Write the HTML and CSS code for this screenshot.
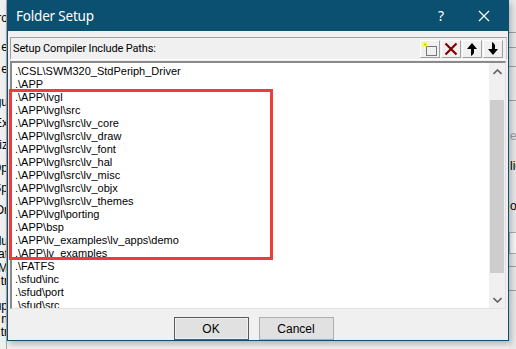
FILE: index.html
```html
<!DOCTYPE html>
<html>
<head>
<meta charset="utf-8">
<link rel="stylesheet" href="styles.css">
</head>
<body>
<div class="desk">
  <div class="bg-left">
    <span class="frag f1">ro</span>
    <span class="frag f2">e</span>
    <span class="frag f3">e</span>
    <span class="frag f4">gu</span>
    <span class="frag f5">Ex</span>
    <span class="frag f6">niz</span>
    <span class="frag f7">Op</span>
    <span class="frag f8">Sp</span>
    <span class="frag f9">Or</span>
    <span class="frag f10">lu</span>
    <span class="frag f11">at</span>
    <span class="frag f12">M</span>
    <span class="frag f13">tr</span>
    <span class="frag f14">up</span>
    <span class="frag f15">n</span>
    <span class="frag f16">tr</span>
  </div>
  <div class="dialog">
    <div class="titlebar">
      <span class="title">Folder Setup</span>
      <span class="help">?</span>
      <svg class="close" width="12" height="12" viewBox="0 0 12 12"><path d="M1 1 L11 11 M11 1 L1 11" stroke="#fff" stroke-width="1.2" fill="none"/></svg>
    </div>
    <div class="body">
      <div class="header">
        <span class="label">Setup Compiler Include Paths:</span>
        <div class="tools">
          <div class="tbtn">
            <svg width="16" height="16" viewBox="0 0 16 16">
              <rect x="4.5" y="5.5" width="10" height="9" fill="none" stroke="#000" stroke-width="1" stroke-dasharray="1 1"/>
              <path d="M3 1 V6 M0.5 3.5 H5.5 M1 1.5 L5 5.5 M5 1.5 L1 5.5" stroke="#ffff00" stroke-width="1"/>
              <path d="M3 2.5 V4.5 M2 3.5 H4" stroke="#c8c800" stroke-width="1"/>
            </svg>
          </div>
          <div class="tbtn">
            <svg width="16" height="16" viewBox="0 0 16 16"><path d="M2.5 2.5 L13.5 13.5 M13.5 2.5 L2.5 13.5" stroke="#800000" stroke-width="2.2" fill="none"/></svg>
          </div>
          <div class="tbtn">
            <svg width="16" height="16" viewBox="0 0 16 16"><path d="M8 2 L13 8 L10 8 L10 12 Q9 14 7 15 L7 8 L3 8 Z" fill="#000"/></svg>
          </div>
          <div class="tbtn">
            <svg width="16" height="16" viewBox="0 0 16 16"><path d="M8 14 L13 8 L10 8 L10 4 Q9 2 7 1 L7 8 L3 8 Z" fill="#000"/></svg>
          </div>
        </div>
      </div>
      <div class="list">
        <div class="items">
          <div class="item">.\CSL\SWM320_StdPeriph_Driver</div>
          <div class="item">.\APP</div>
          <div class="item">.\APP\lvgl</div>
          <div class="item">.\APP\lvgl\src</div>
          <div class="item">.\APP\lvgl\src\lv_core</div>
          <div class="item">.\APP\lvgl\src\lv_draw</div>
          <div class="item">.\APP\lvgl\src\lv_font</div>
          <div class="item">.\APP\lvgl\src\lv_hal</div>
          <div class="item">.\APP\lvgl\src\lv_misc</div>
          <div class="item">.\APP\lvgl\src\lv_objx</div>
          <div class="item">.\APP\lvgl\src\lv_themes</div>
          <div class="item">.\APP\lvgl\porting</div>
          <div class="item">.\APP\bsp</div>
          <div class="item">.\APP\lv_examples\lv_apps\demo</div>
          <div class="item">.\APP\lv_examples</div>
          <div class="item">.\FATFS</div>
          <div class="item">.\sfud\inc</div>
          <div class="item">.\sfud\port</div>
          <div class="item">.\sfud\src</div>
        </div>
        <div class="scrollbar">
          <div class="arrow">
            <svg width="9" height="6" viewBox="0 0 9 6"><path d="M0.5 5 L4.5 1 L8.5 5" stroke="#606060" stroke-width="1.6" fill="none"/></svg>
          </div>
          <div class="track"><div class="thumb"></div></div>
          <div class="arrow">
            <svg width="9" height="6" viewBox="0 0 9 6"><path d="M0.5 1 L4.5 5 L8.5 1" stroke="#606060" stroke-width="1.6" fill="none"/></svg>
          </div>
        </div>
        <div class="mark"></div>
      </div>
      <div class="footer">
        <button class="btn default">OK</button>
        <button class="btn">Cancel</button>
      </div>
    </div>
  </div>
  <div class="bg-right">
    <div class="rl r1"></div>
    <div class="rl r2"></div>
    <div class="rl r3"></div>
    <div class="rl r4"></div>
    <span class="rfrag g1">e</span>
    <span class="rfrag g2">lic</span>
    <span class="rfrag g3">o</span>
    <div class="rbox"></div>
    <div class="rl r5"></div>
    <div class="rl r6"></div>
  </div>
</div>
</body>
</html>
```
FILE: styles.css
```css
* { box-sizing: border-box; }
html, body { margin: 0; padding: 0; }
body {
  width: 516px;
  height: 349px;
  overflow: hidden;
  background: #f0f0f0;
  font-family: "Liberation Sans", Arial, sans-serif;
}
.desk {
  display: flex;
  height: 349px;
}
.bg-left {
  width: 7px;
  position: relative;
  overflow: hidden;
  background: #f0f0f0;
  border-right: 1px solid #a8a8a8;
  font-size: 12px;
  color: #000;
}
.frag { position: absolute; right: -2px; line-height: 12px; white-space: nowrap; }
.f1 { top: 12px; }
.f2 { top: 41px; }
.f3 { top: 63px; }
.f4 { top: 96px; }
.f5 { top: 117px; }
.f6 { top: 139px; }
.f7 { top: 162px; }
.f8 { top: 182px; }
.f9 { top: 204px; }
.f10 { top: 235px; }
.f11 { top: 248px; }
.f12 { top: 262px; }
.f13 { top: 275px; }
.f14 { top: 300px; }
.f15 { top: 313px; }
.f16 { top: 326px; }
.dialog {
  width: 502px;
  height: 341px;
  border: 1px solid #0b4f71;
  border-top: 0;
  background: #f0f0f0;
  display: flex;
  flex-direction: column;
  box-shadow: 2px 3px 6px rgba(0,0,0,0.25);
  position: relative;
  z-index: 1;
}
.titlebar {
  height: 31px;
  background: #0b4f71;
  display: flex;
  align-items: center;
  color: #fff;
  padding-left: 8px;
  padding-right: 18px;
}
.title {
  font-family: "Noto Sans", sans-serif;
  font-size: 13.5px;
  letter-spacing: -0.2px;
  flex: 1;
  padding-top: 1px;
}
.help {
  font-family: "Noto Sans", sans-serif;
  font-size: 14px;
  margin-right: 34px;
}
.close { display: block; }
.body {
  flex: 1;
  display: flex;
  flex-direction: column;
  padding: 6px 1px 0 2px;
}
.header {
  height: 23px;
  display: flex;
  align-items: center;
  border-top: 1px solid #a0a0a0;
  border-left: 1px solid #a0a0a0;
  border-right: 1px solid #c8c8c8;
  border-bottom: 1px solid #ffffff;
  padding-left: 2px;
  padding-right: 3px;
}
.label {
  flex: 1;
  font-family: Roboto, sans-serif;
  font-size: 11px;
  letter-spacing: -0.15px;
  color: #000;
}
.tools { display: flex; gap: 1px; }
.tbtn {
  width: 20px;
  height: 18px;
  display: flex;
  align-items: center;
  justify-content: center;
  background: #f0f0f0;
  border-top: 1px solid #ffffff;
  border-left: 1px solid #ffffff;
  border-right: 1px solid #a0a0a0;
  border-bottom: 1px solid #a0a0a0;
}
.tbtn svg { display: block; }
.list {
  height: 248px;
  margin-top: 1px;
  display: flex;
  background: #fff;
  border-top: 2px solid #8a8a8a;
  border-left: 2px solid #8a8a8a;
  border-right: 1px solid #e0e0e0;
  border-bottom: 1px solid #e3e3e3;
  position: relative;
  margin-right: 1px;
}
.items {
  flex: 1;
  overflow: hidden;
  padding-left: 3px;
  padding-top: 2px;
  font-size: 11px;
  color: #000;
}
.item { height: 13px; line-height: 13px; white-space: nowrap; }
.scrollbar {
  width: 16px;
  background: #f0f0f0;
  display: flex;
  flex-direction: column;
}
.arrow {
  height: 17px;
  display: flex;
  align-items: center;
  justify-content: center;
}
.track { flex: 1; padding-top: 20px; }
.thumb { height: 173px; background: #cdcdcd; margin: 0 1px; }
.mark {
  position: absolute;
  left: -3px;
  top: 26px;
  width: 264px;
  height: 171px;
  border: 3px solid #ef3b3b;
}
.footer {
  flex: 1;
  display: flex;
  justify-content: center;
  align-items: flex-end;
  gap: 10px;
  padding-right: 10px;
}
.btn {
  width: 75px;
  height: 23px;
  font-family: "Liberation Sans", Arial, sans-serif;
  font-size: 12px;
  color: #000;
  background: #e1e1e1;
  border: 1px solid #adadad;
  margin: 0;
  padding: 0;
}
.btn.default {
  border: 1px solid #5a5a5a;
  box-shadow: inset 0 0 0 1px #f0f0f0;
}
.bg-right {
  flex: 1;
  position: relative;
  overflow: hidden;
  background: #e8e8e8;
  font-size: 12px;
}
.rl { position: absolute; left: 0; right: 0; height: 1px; background: #a0a0a0; }
.r1 { top: 32px; }
.r2 { top: 47px; }
.r3 { top: 66px; }
.r4 { top: 100px; }
.r5 { top: 266px; }
.r6 { top: 290px; }
.rfrag { position: absolute; left: 1px; line-height: 12px; }
.g1 { top: 130px; color: #9a9a9a; }
.g2 { top: 160px; }
.g3 { top: 200px; }
.rbox { position: absolute; left: 0; top: 232px; width: 10px; height: 22px; border: 1px solid #adadad; background: #f6f6f6; }
```
